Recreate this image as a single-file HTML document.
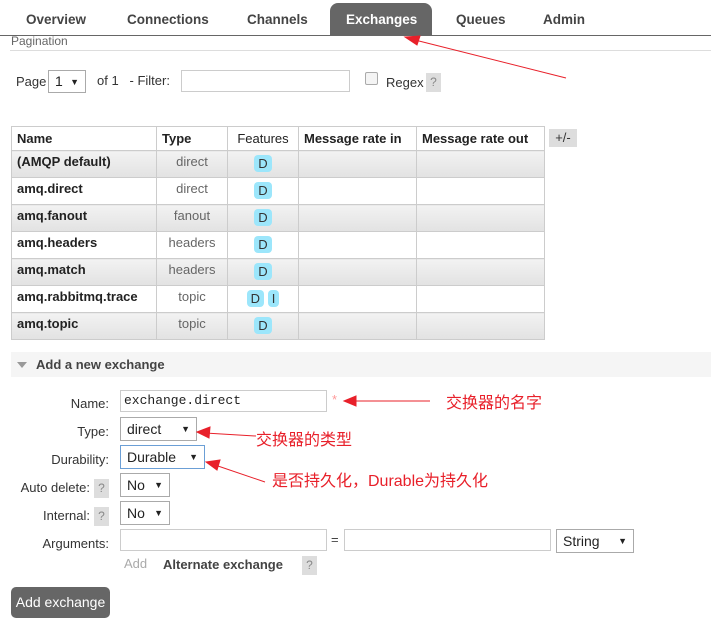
<!DOCTYPE html>
<html><head><meta charset="utf-8"><style>
body{margin:0;width:711px;height:628px;background:#fff;font-family:"Liberation Sans",Arial,sans-serif;font-size:13px;color:#444;position:relative;overflow:hidden}
.a{position:absolute;white-space:nowrap}
.tab{position:absolute;top:12px;font-weight:bold;font-size:13.5px;color:#444}
.cjk{font-family:"Liberation Sans","Noto Sans CJK SC",sans-serif;color:#e8202a;font-size:16px}
.inp{position:absolute;border:1px solid #ccc;background:#fff;box-sizing:border-box}
.sel{position:absolute;border:1px solid #aaa;background:#fff;box-sizing:border-box;font-size:14px;color:#222;padding:3px 6px}
.sel:after{content:"▼";position:absolute;right:6px;top:6px;font-size:9px}
.q{position:absolute;background:#ddd;color:#888;font-size:12px;width:15px;height:19px;text-align:center;line-height:19px}
table{position:absolute;left:11px;top:126px;border-collapse:collapse;font-size:13px;table-layout:fixed;width:533px}
td,th{border:1px solid #ccc;height:27px;padding:0 5px;text-align:left;vertical-align:top;padding-top:3px;box-sizing:border-box;white-space:nowrap;overflow:hidden}
th{font-weight:bold;color:#222;padding-top:4px;height:24px}
td:first-child{font-weight:bold;color:#222}
td:nth-child(2){text-align:center;color:#666}
td:nth-child(3){text-align:center}
tr.g td{background:linear-gradient(#f2f2f2,#e2e2e2)}
.b{display:inline-block;background:#9ce6fb;border-radius:4px;padding:1px 4px;font-size:13px;color:#333;margin-top:1px}
.lbl{position:absolute;font-size:13px;color:#333;text-align:right}
</style></head><body>
<div class="a" style="left:330px;top:3px;width:102px;height:32px;background:#666;border-radius:8px 8px 0 0"></div>
<div class="tab" style="left:26px">Overview</div>
<div class="tab" style="left:127px">Connections</div>
<div class="tab" style="left:247px">Channels</div>
<div class="tab" style="left:346px;color:#fff">Exchanges</div>
<div class="tab" style="left:456px">Queues</div>
<div class="tab" style="left:543px">Admin</div>
<div class="a" style="left:0;top:35px;width:711px;height:1px;background:#666"></div>
<div class="a" style="left:11px;top:34px;font-size:12px;color:#666">Pagination</div>
<div class="a" style="left:10px;top:50px;width:701px;height:1px;background:#ddd"></div>
<div class="a" style="left:16px;top:74px;color:#333">Page</div>
<div class="sel" style="left:48px;top:70px;width:38px;height:23px;padding:2px 6px">1</div>
<div class="a" style="left:97px;top:73px;color:#333">of 1 &nbsp; - Filter:</div>
<div class="inp" style="left:181px;top:70px;width:169px;height:22px"></div>
<div class="a" style="left:365px;top:72px;width:11px;height:11px;border:1px solid #aaa;border-radius:2px;background:#f4f4f4"></div>
<div class="a" style="left:386px;top:75px;color:#333">Regex</div>
<div class="q" style="left:426px;top:73px">?</div>
<table>
<colgroup><col style="width:145px"><col style="width:71px"><col style="width:71px"><col style="width:118px"><col style="width:128px"></colgroup>
<tr><th>Name</th><th>Type</th><th style="font-weight:normal;text-align:center">Features</th><th>Message rate in</th><th>Message rate out</th></tr>
<tr class="g"><td>(AMQP default)</td><td>direct</td><td><span class="b">D</span></td><td></td><td></td></tr>
<tr><td>amq.direct</td><td>direct</td><td><span class="b">D</span></td><td></td><td></td></tr>
<tr class="g"><td>amq.fanout</td><td>fanout</td><td><span class="b">D</span></td><td></td><td></td></tr>
<tr><td>amq.headers</td><td>headers</td><td><span class="b">D</span></td><td></td><td></td></tr>
<tr class="g"><td>amq.match</td><td>headers</td><td><span class="b">D</span></td><td></td><td></td></tr>
<tr><td>amq.rabbitmq.trace</td><td>topic</td><td><span class="b">D</span> <span class="b">I</span></td><td></td><td></td></tr>
<tr class="g"><td>amq.topic</td><td>topic</td><td><span class="b">D</span></td><td></td><td></td></tr>
</table>
<div class="a" style="left:549px;top:129px;width:28px;height:18px;background:#ddd;text-align:center;line-height:18px;color:#333">+/-</div>
<div class="a" style="left:11px;top:352px;width:700px;height:25px;background:#f5f5f5"></div>
<div class="a" style="left:17px;top:362px;width:0;height:0;border-left:5px solid transparent;border-right:5px solid transparent;border-top:6px solid #999"></div>
<div class="a" style="left:36px;top:357px;font-weight:bold;font-size:13px;color:#444">Add a new exchange</div>
<div class="lbl" style="left:0;width:109px;top:396px">Name:</div>
<div class="inp" style="left:120px;top:390px;width:207px;height:22px;font-family:'Liberation Mono',monospace;font-size:13px;padding:2px 3px;color:#222">exchange.direct</div>
<div class="a" style="left:332px;top:392px;color:#f99">*</div>
<div class="lbl" style="left:0;width:109px;top:424px">Type:</div>
<div class="sel" style="left:120px;top:417px;width:77px;height:24px">direct</div>
<div class="lbl" style="left:0;width:109px;top:452px">Durability:</div>
<div class="sel" style="left:120px;top:445px;width:85px;height:24px;border-color:#6b9fd6">Durable</div>
<div class="lbl" style="left:0;width:90px;top:480px">Auto delete:</div>
<div class="q" style="left:94px;top:479px">?</div>
<div class="sel" style="left:120px;top:473px;width:50px;height:24px">No</div>
<div class="lbl" style="left:0;width:90px;top:508px">Internal:</div>
<div class="q" style="left:94px;top:507px">?</div>
<div class="sel" style="left:120px;top:501px;width:50px;height:24px">No</div>
<div class="lbl" style="left:0;width:109px;top:536px">Arguments:</div>
<div class="inp" style="left:120px;top:529px;width:207px;height:22px"></div>
<div class="a" style="left:331px;top:532px">=</div>
<div class="inp" style="left:344px;top:529px;width:207px;height:22px"></div>
<div class="sel" style="left:556px;top:529px;width:78px;height:24px">String</div>
<div class="a" style="left:124px;top:556px;color:#aaa">Add</div>
<div class="a" style="left:163px;top:557px;font-weight:bold;font-size:13px;color:#444">Alternate exchange</div>
<div class="q" style="left:302px;top:556px">?</div>
<div class="a" style="left:11px;top:587px;width:99px;height:31px;background:#666;border-radius:5px;color:#fff;font-size:14px;text-align:center;line-height:31px">Add exchange</div>
<div class="a cjk" style="left:446px;top:389px">交换器的名字</div>
<div class="a cjk" style="left:256px;top:426px">交换器的类型</div>
<div class="a cjk" style="left:272px;top:467px">是否持久化，Durable为持久化</div>
<svg class="a" style="left:0;top:0" width="711" height="628">
<g stroke="#e8202a" stroke-width="1" fill="#e8202a">
<line x1="566" y1="78" x2="415" y2="40"/><polygon points="405,37 420,36 417,45"/>
<line x1="430" y1="401" x2="352" y2="401"/><polygon points="344,401 356,396 356,406"/>
<line x1="256" y1="436" x2="205" y2="433"/><polygon points="197,432 210,427 209,438"/>
<line x1="265" y1="482" x2="215" y2="465"/><polygon points="206,462 220,460 217,470"/>
</g></svg>
</body></html>
